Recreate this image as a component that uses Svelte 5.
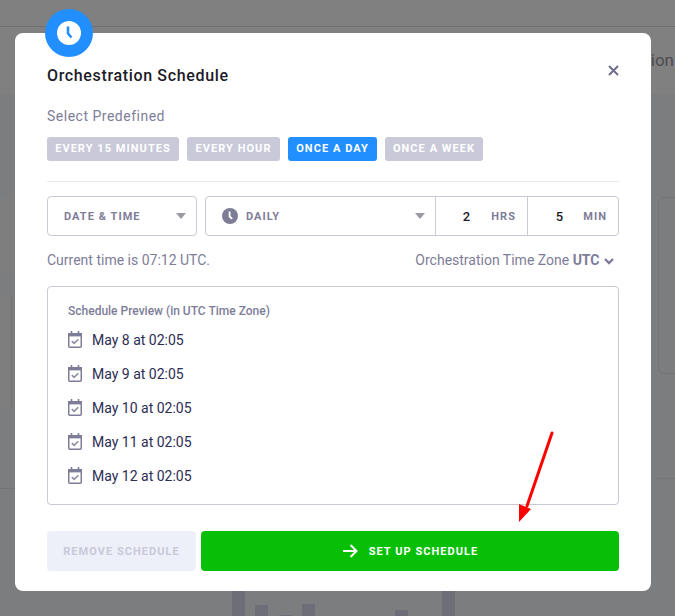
<script>
	const presets = [
		{ label: 'Every 15 minutes', width: 132, active: false },
		{ label: 'Every hour', width: 93, active: false },
		{ label: 'Once a day', width: 89, active: true },
		{ label: 'Once a week', width: 98, active: false }
	];
	const dates = ['May 8', 'May 9', 'May 10', 'May 11', 'May 12'];
	const barHeights = [25, 11, 1, 12, 0, 0, 0, 6, 0, 25];
</script>

<div class="page">
	<div class="page-top">
		<div class="page-nav"></div>
		<div class="page-title">ion</div>
	</div>
	<div class="bars">
		{#each barHeights as h}
			<span style="height: {h}px"></span>
		{/each}
	</div>
	<div class="side-panel"></div>
	<div class="side-card left"></div>
	<div class="side-card right"></div>
	<div class="rule left"></div>
	<div class="rule right"></div>
</div>

<div class="modal">
	<div class="badge">
		<svg width="24" height="24" viewBox="0 0 24 24">
			<circle cx="12" cy="12" r="12" fill="#fff" />
			<path d="M11 5.5v7l3.4 4" fill="none" stroke="#218fff" stroke-width="2.6" stroke-linejoin="round" />
		</svg>
	</div>
	<button class="close" aria-label="Close">
		<svg width="11" height="11" viewBox="0 0 11 11">
			<path d="M1 1l9 9M10 1l-9 9" stroke="#6f6e8c" stroke-width="2" fill="none" />
		</svg>
	</button>

	<h2>Orchestration Schedule</h2>
	<div class="predefined-label">Select Predefined</div>
	<div class="presets">
		{#each presets as preset}
			<button class="preset" class:active={preset.active} style="width: {preset.width}px">{preset.label}</button>
		{/each}
	</div>

	<div class="divider"></div>

	<div class="controls">
		<div class="select date-type">
			<span class="caps">Date &amp; Time</span>
			<i class="caret"></i>
		</div>
		<div class="field-group">
			<div class="select freq">
				<svg class="freq-icon" width="16" height="16" viewBox="0 0 16 16">
					<circle cx="8" cy="8" r="8" fill="#7e7d98" />
					<path d="M7.6 3.5v5l2.6 2.4" fill="none" stroke="#fff" stroke-width="1.8" />
				</svg>
				<span class="caps">Daily</span>
				<i class="caret"></i>
			</div>
			<div class="num hrs">
				<span class="value">2</span>
				<span class="caps">Hrs</span>
			</div>
			<div class="num">
				<span class="value">5</span>
				<span class="caps">Min</span>
			</div>
		</div>
	</div>

	<div class="time-row">
		<span>Current time is 07:12 UTC.</span>
		<span class="zone">
			Orchestration Time Zone <b>UTC</b>
			<svg width="10" height="7" viewBox="0 0 10 7">
				<path d="M1 1l4 4 4-4" fill="none" stroke="#7e7d98" stroke-width="2.4" />
			</svg>
		</span>
	</div>

	<div class="preview">
		<div class="preview-title">Schedule Preview (in UTC Time Zone)</div>
		<div class="preview-rows">
			{#each dates as date}
				<div class="preview-row">
					<svg class="cal" width="14" height="17" viewBox="0 0 14 17">
						<path d="M3.5 0v3.5M10.5 0v3.5" stroke="#7e7d98" stroke-width="1.6" fill="none" />
						<path d="M0 2h14v3.4H0z" fill="#7e7d98" />
						<rect x="0.75" y="2.75" width="12.5" height="13.5" rx="1" fill="none" stroke="#7e7d98" stroke-width="1.5" />
						<path d="M3.8 10.2l2.3 2.2 4.2-4.2" fill="none" stroke="#8d8ca4" stroke-width="1.6" />
					</svg>
					<span>{date} at 02:05</span>
				</div>
			{/each}
		</div>
	</div>

	<div class="actions">
		<button class="remove">Remove Schedule</button>
		<button class="setup">
			<svg width="16" height="14" viewBox="0 0 16 14">
				<path d="M1 7h13M8.5 1l6 6-6 6" fill="none" stroke="#fff" stroke-width="2" />
			</svg>
			<span>Set up Schedule</span>
		</button>
	</div>
</div>

<svg class="annotation" width="40" height="100" viewBox="0 0 40 100">
	<path d="M36 3L11 76" stroke="#fe0000" stroke-width="3" stroke-linecap="round" fill="none" />
	<path d="M3 92V74l12 5z" fill="#fe0000" />
</svg>

<style>
	:global(body) {
		margin: 0;
		background: #7b7d7f;
		font-family: Roboto, "Liberation Sans", sans-serif;
		overflow: hidden;
	}

	.page {
		position: relative;
		height: 616px;
		overflow: hidden;
	}

	.page-top {
		height: 94px;
		background: #808080;
		position: relative;
	}

	.page-nav {
		height: 26px;
		border-bottom: 1px solid #6f6f6f;
	}

	.page-title {
		position: absolute;
		right: 1px;
		top: 50px;
		font-size: 17px;
		color: #4c4c52;
	}

	.bars {
		position: absolute;
		left: 232px;
		bottom: 0;
		height: 25px;
		width: 223px;
		display: flex;
		align-items: flex-end;
		justify-content: space-between;
	}

	.bars span {
		width: 13px;
		background: #6d6e78;
	}

	.side-panel {
		position: absolute;
		left: 0;
		top: 197px;
		width: 15px;
		height: 73px;
		background: #7e7e7e;
	}

	.side-card {
		position: absolute;
	}

	.side-card.left {
		left: -10px;
		top: 297px;
		width: 21px;
		height: 110px;
		background: #7e7e7e;
		border-right: 1px solid #737373;
	}

	.side-card.right {
		left: 658px;
		top: 197px;
		width: 40px;
		height: 175px;
		border: 1px solid #737478;
		border-radius: 6px;
	}

	.rule {
		position: absolute;
		height: 1px;
		background: #737478;
	}

	.rule.left {
		left: 0;
		top: 488px;
		width: 15px;
	}

	.rule.right {
		left: 657px;
		top: 478px;
		width: 18px;
	}

	.modal {
		position: absolute;
		left: 15px;
		top: 33px;
		width: 572px;
		height: 494px;
		padding: 32px;
		background: #fff;
		border-radius: 8px;
	}

	.badge {
		position: absolute;
		left: 30px;
		top: -24px;
		width: 48px;
		height: 48px;
		border-radius: 50%;
		background: #218fff;
		display: flex;
		align-items: center;
		justify-content: center;
	}

	.close {
		position: absolute;
		right: 32px;
		top: 32px;
		padding: 0;
		border: 0;
		background: none;
		line-height: 0;
	}

	h2 {
		margin: 1px 0 0;
		font-size: 16px;
		font-weight: 500;
		line-height: 20px;
		letter-spacing: 0.65px;
		color: #1c1c28;
	}

	.predefined-label {
		margin-top: 20px;
		font-size: 14px;
		line-height: 20px;
		letter-spacing: 0.5px;
		color: #7e7d98;
	}

	.presets {
		display: flex;
		gap: 8px;
		margin-top: 11px;
	}

	.preset {
		height: 24px;
		padding: 0 0 2px;
		border: 0;
		border-radius: 3px;
		background: #c9c9d9;
		color: #fff;
		font: 700 11px Roboto, sans-serif;
		letter-spacing: 1.05px;
		text-transform: uppercase;
		white-space: nowrap;
	}

	.preset.active {
		background: #218fff;
	}

	.divider {
		height: 1px;
		margin-top: 20px;
		background: #e8e8ef;
	}

	.controls {
		display: flex;
		gap: 8px;
		margin-top: 14px;
	}

	.select,
	.field-group {
		height: 38px;
		border: 1px solid #c9c9d9;
		border-radius: 4px;
		box-sizing: content-box;
	}

	.select {
		display: flex;
		align-items: center;
	}

	.date-type {
		width: 150px;
		padding-left: 16px;
		box-sizing: border-box;
		height: 40px;
	}

	.field-group {
		flex: 1;
		display: flex;
	}

	.freq {
		flex: 1;
		height: auto;
		border: 0;
		border-radius: 0;
		padding-left: 16px;
	}

	.freq-icon {
		margin-right: 8px;
	}

	.caps {
		font-size: 11px;
		font-weight: 700;
		letter-spacing: 1.05px;
		text-transform: uppercase;
		color: #7e7d98;
	}

	.caret {
		margin-left: auto;
		margin-right: 10px;
		border-left: 5.5px solid transparent;
		border-right: 5.5px solid transparent;
		border-top: 6px solid #9a9aa6;
	}

	.num {
		display: flex;
		align-items: center;
		justify-content: flex-end;
		width: 91px;
		box-sizing: border-box;
		padding-right: 11px;
		border-left: 1px solid #c9c9d9;
	}

	.num.hrs {
		width: 92px;
	}

	.num .value {
		margin-right: 20px;
		font-size: 13px;
		font-weight: 500;
		color: #1c1c28;
	}

	.num.hrs .value {
		margin-right: 21px;
	}

	.time-row {
		display: flex;
		justify-content: space-between;
		align-items: center;
		margin-top: 14px;
		font-size: 14px;
		line-height: 20px;
		color: #7e7d98;
	}

	.zone b {
		font-weight: 700;
	}

	.zone svg {
		margin-left: 1px;
		margin-right: 5px;
	}

	.preview {
		height: 219px;
		margin-top: 16px;
		padding: 15px 20px 0;
		box-sizing: border-box;
		border: 1px solid #c9c9d9;
		border-radius: 4px;
	}

	.preview-title {
		font-size: 12px;
		font-weight: 500;
		line-height: 18px;
		color: #7e7d98;
	}

	.preview-rows {
		margin-top: 3px;
	}

	.preview-row {
		display: flex;
		align-items: center;
		gap: 10px;
		height: 34px;
		font-size: 14px;
		color: #2c2c54;
	}

	.cal {
		margin-bottom: 2px;
	}

	.actions {
		display: flex;
		gap: 5px;
		margin-top: 26px;
	}

	.actions button {
		height: 40px;
		border: 0;
		border-radius: 4px;
		font: 700 11px Roboto, sans-serif;
		letter-spacing: 1.05px;
		text-transform: uppercase;
	}

	.remove {
		width: 149px;
		background: #edf0f8;
		color: #c9c9d9;
	}

	.setup {
		flex: 1;
		display: flex;
		align-items: center;
		justify-content: center;
		gap: 11px;
		background: #06bf06;
		color: #fff;
	}

	.annotation {
		position: absolute;
		left: 516px;
		top: 430px;
	}
</style>
